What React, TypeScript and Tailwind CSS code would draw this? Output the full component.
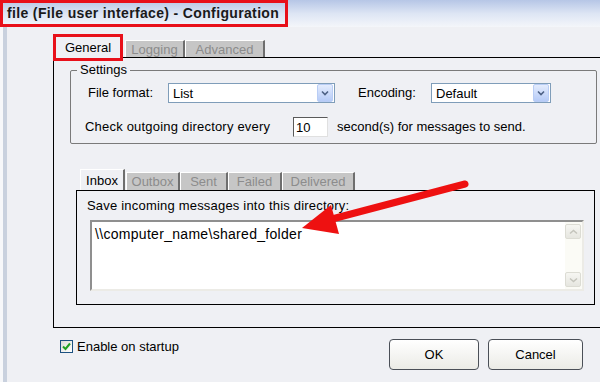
import React from "react";

const font = "font-['Liberation_Sans',Arial,sans-serif]";

function Select({ value, width }: { value: string; width: string }) {
  return (
    <div className={`${width} h-[20px] flex items-center border border-[#7f9db9] bg-white`}>
      <span className="flex-1 pl-[4px] text-[13px] leading-none text-black">{value}</span>
      <span className="w-[16px] h-[18px] mr-[1px] flex items-center justify-center rounded-[2px] border border-[#b9cdf5] bg-gradient-to-b from-[#e4ecfd] to-[#b6cbf7]">
        <svg width="8" height="6" viewBox="0 0 8 6">
          <path d="M1 1.5 L4 4.5 L7 1.5" fill="none" stroke="#4d6185" strokeWidth="1.6" />
        </svg>
      </span>
    </div>
  );
}

function InactiveTab({ label, width }: { label: string; width: string }) {
  return (
    <div
      className={`${width} h-[18px] flex items-center justify-center bg-[#c6c6c6] border-l border-l-white border-r-2 border-r-[#6e6e6e] border-t border-t-white text-[13px] leading-none text-[#8c8c8c]`}
    >
      {label}
    </div>
  );
}

export default function App() {
  return (
    <div className={`relative w-[600px] h-[382px] overflow-hidden bg-[#eff0f4] ${font}`}>
      {/* title */}
      <div className="h-[27px] bg-gradient-to-b from-[#b6c6e6] via-[#dde5f4] to-[#f4f6fa]">
        <div className="w-[288px] h-[27px] border-[3px] border-[#e8101a] flex items-center pl-[4px]">
          <span className="text-[14px] font-bold text-[#1a1a1a] tracking-[0.35px]">
            file (File user interface) - Configuration
          </span>
        </div>
      </div>

      <div className="flex h-[355px]">
        <div className="w-[3px] shrink-0 bg-[#f7f8fa]" />
        <div className="w-[4px] shrink-0 bg-[#c9d1de]" />

        <div className="flex-1 min-w-0 flex flex-col pl-[46px]">
          {/* main tabs */}
          <div className="flex items-end h-[31px] -mb-[1px]">
            <div className="relative z-10 -mb-[3px] w-[70px] h-[27px] border-[3px] border-[#e8101a] bg-[#eff0f4] flex items-center justify-center text-[13px] leading-none text-black">
              General
            </div>
            <div className="flex items-end ml-[2px]">
              <InactiveTab label="Logging" width="w-[60px]" />
              <InactiveTab label="Advanced" width="w-[80px]" />
            </div>
          </div>

          {/* main panel */}
          <div className="w-[560px] shrink-0 h-[271px] border border-black pl-[16px] pt-[12px]">
            {/* Settings group */}
            <div className="relative w-[527px] h-[74px] border border-[#7a7a7a] rounded-[2px]">
              <span className="absolute -top-[8px] left-[6px] px-[3px] bg-[#eff0f4] text-[13px] leading-none text-black">
                Settings
              </span>
              <div className="flex items-center mt-[12px] ml-[17px] h-[20px]">
                <span className="w-[80px] text-[13px] text-black">File format:</span>
                <Select value="List" width="w-[167px]" />
                <span className="ml-[23px] w-[73px] text-[13px] text-black">Encoding:</span>
                <Select value="Default" width="w-[120px]" />
              </div>
              <div className="flex items-center mt-[14px] ml-[14px] h-[20px]">
                <span className="w-[208px] text-[13px] tracking-[0.2px] text-black">Check outgoing directory every</span>
                <div className="w-[35px] h-[20px] bg-white border border-t-[#5a5a5a] border-l-[#5a5a5a] border-r-[#e0e0e0] border-b-[#e0e0e0] flex items-center pl-[2px] text-[13px] leading-none text-black">
                  10
                </div>
                <span className="ml-[9px] text-[13px] text-black">second(s) for messages to send.</span>
              </div>
            </div>

            {/* inner tabs */}
            <div className="flex items-end h-[21px] mt-[25px] ml-[10px]">
              <div className="w-[45px] h-[21px] bg-[#eff0f4] border-l border-l-white border-t border-t-white border-r-2 border-r-[#6e6e6e] flex items-center justify-center text-[13px] leading-none text-black">
                Inbox
              </div>
              <div className="flex items-end ml-[1px]">
                <InactiveTab label="Outbox" width="w-[54px]" />
                <InactiveTab label="Sent" width="w-[48px]" />
                <InactiveTab label="Failed" width="w-[54px]" />
                <InactiveTab label="Delivered" width="w-[73px]" />
              </div>
            </div>

            <div className="w-[519px] h-[115px] ml-[6px] border border-black pl-[10px] pt-[8px]">
              <div className="text-[13px] leading-none tracking-[0.2px] text-black">Save incoming messages into this directory:</div>
              <div className="mt-[8px] ml-[3px] w-[494px] h-[71px] bg-white border-2 border-t-[#8f8f8f] border-l-[#8f8f8f] border-r-[#ecebe6] border-b-[#ecebe6] flex">
                <div className="flex-1 pl-[3px] pt-[5px] text-[14px] leading-none tracking-[0.3px] text-black">
                  \\computer_name\shared_folder
                </div>
                <div className="w-[17px] bg-[#fbfbf6] flex flex-col justify-between py-[2px] pr-[1px]">
                  <div className="h-[15px] border border-[#dcdcd4] rounded-[2px] bg-gradient-to-b from-[#f6f6f2] to-[#e6e6e0] flex items-center justify-center">
                    <svg width="9" height="6" viewBox="0 0 9 6">
                      <path d="M1 4.5 L4.5 1.5 L8 4.5" fill="none" stroke="#c4c4bc" strokeWidth="1.5" />
                    </svg>
                  </div>
                  <div className="h-[15px] border border-[#dcdcd4] rounded-[2px] bg-gradient-to-b from-[#f6f6f2] to-[#e6e6e0] flex items-center justify-center">
                    <svg width="9" height="6" viewBox="0 0 9 6">
                      <path d="M1 1.5 L4.5 4.5 L8 1.5" fill="none" stroke="#c4c4bc" strokeWidth="1.5" />
                    </svg>
                  </div>
                </div>
              </div>
            </div>
          </div>

          {/* bottom row */}
          <div className="flex items-start mt-[11px]">
            <label className="flex items-center ml-[7px] mt-[1px]">
              <span className="w-[13px] h-[13px] border border-[#1c5180] bg-gradient-to-br from-[#dcdcd6] to-white flex items-center justify-center">
                <svg width="9" height="9" viewBox="0 0 9 9">
                  <path d="M1 4.5 L3.5 7 L8 1.5" fill="none" stroke="#21a121" strokeWidth="2" />
                </svg>
              </span>
              <span className="ml-[4px] text-[13px] leading-none text-black">Enable on startup</span>
            </label>
            <div className="flex gap-[9px] ml-auto mr-[17px]">
              <button className="w-[90px] h-[31px] rounded-[4px] border border-[#4a4f57] bg-gradient-to-b from-white to-[#ebebe6] text-[13px] text-black">
                OK
              </button>
              <button className="w-[95px] h-[31px] rounded-[4px] border border-[#4a4f57] bg-gradient-to-b from-white to-[#ebebe6] text-[13px] text-black">
                Cancel
              </button>
            </div>
          </div>
        </div>
      </div>

      {/* red annotation arrow */}
      <svg className="absolute left-0 top-0 pointer-events-none" width="600" height="382">
        <line x1="465" y1="184" x2="332" y2="219" stroke="#ee1111" strokeWidth="7" strokeLinecap="round" />
        <polygon points="302,228 331,205 339,234" fill="#ee1111" />
      </svg>
    </div>
  );
}
